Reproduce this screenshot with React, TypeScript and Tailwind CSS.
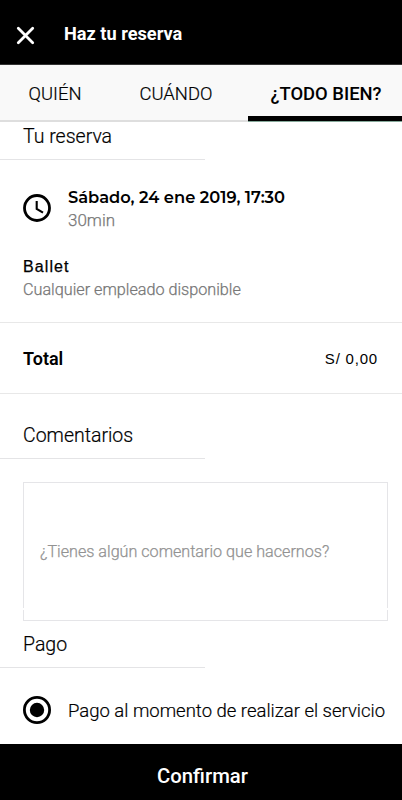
import React from "react";

function SectionTitle({ children }: { children: React.ReactNode }) {
  return (
    <h2 className="w-[205px] border-b border-[#e4e4e6] pl-[23px] pt-px text-[19.5px] font-light leading-6 text-black [-webkit-text-stroke:0.2px_currentColor]">
      {children}
    </h2>
  );
}

export default function App() {
  return (
    <div className="flex h-[800px] w-[402px] flex-col overflow-hidden bg-white font-['Roboto',sans-serif] text-black">
      <header className="flex h-16 shrink-0 items-start bg-black text-white">
        <svg className="ml-4 mt-[26px] h-[19px] w-[19px]" viewBox="0 0 19 19" fill="none" stroke="white" strokeWidth="2.8" strokeLinecap="round">
          <path d="M2.3 2.3 16.7 16.7M16.7 2.3 2.3 16.7" />
        </svg>
        <h1 className="ml-[29px] mt-[22px] text-[18.2px] font-bold leading-6">Haz tu reserva</h1>
      </header>

      <nav className="flex h-[58px] shrink-0 border-t border-[#333] bg-[#f9f9f9] text-[18.4px] leading-6">
        <div className="h-[57px] w-[110px] border-b-2 border-[#dedede] pl-[28.5px] pt-[17px] font-light [-webkit-text-stroke:0.2px_currentColor]">QUIÉN</div>
        <div className="h-[57px] w-[138px] border-b-2 border-[#dedede] pl-[29.5px] pt-[17px] font-light [-webkit-text-stroke:0.2px_currentColor]">CUÁNDO</div>
        <div className="flex h-[57px] flex-1 flex-col justify-between pt-[17px] font-medium">
          <span className="pl-[22.5px]">¿TODO BIEN?</span>
          <span className="h-[6px] border-b border-[#86a99a] bg-black" />
        </div>
      </nav>

      <main className="flex h-[622px] shrink-0 flex-col">
        <div className="h-[38px] pt-[2px] [&>h2]:h-9">
          <SectionTitle>Tu reserva</SectionTitle>
        </div>

        <section className="h-[163px] border-b border-[#e8e8e8] pl-[23px] pt-[26px]">
          <div className="flex h-[69px]">
            <svg className="mt-[8px] h-7 w-7 shrink-0" viewBox="0 0 28 28" fill="none" stroke="black" strokeWidth="2.8">
              <circle cx="14" cy="14" r="12.5" />
              <path d="M13.7 7v7.8l6.3 3.8" strokeWidth="2.1" />
            </svg>
            <div className="ml-[17px]">
              <p className="whitespace-nowrap font-['Montserrat','Inter',sans-serif] text-[16.3px] font-semibold leading-[22px]">Sábado, 24 ene 2019, 17:30</p>
              <p className="text-[17px] font-light leading-6 text-[#777] [-webkit-text-stroke:0.25px_currentColor]">30min</p>
            </div>
          </div>
          <p className="font-['Liberation_Sans',sans-serif] text-base leading-6 tracking-[1.1px] [-webkit-text-stroke:0.25px_black]">Ballet</p>
          <p className="text-[16.2px] font-light leading-[22px] text-[#777] [-webkit-text-stroke:0.25px_currentColor]">Cualquier empleado disponible</p>
        </section>

        <section className="flex h-[71px] items-center justify-between border-b border-[#e8e8e8] pl-[23px] pr-6 pt-px">
          <span className="text-lg font-semibold leading-6">Total</span>
          <span className="font-['Liberation_Sans',sans-serif] text-[15px] leading-6 tracking-[0.8px]">S/ 0,00</span>
        </section>

        <div className="pt-[29px] [&>h2]:h-9">
          <SectionTitle>Comentarios</SectionTitle>
        </div>
        <div className="ml-[23px] mt-[23px] flex h-[139px] w-[365px] shrink-0 flex-col justify-between">
          <div className="flex h-[126px] items-center border border-b-0 border-[#e5e5e8] pl-4 pt-[13px]">
            <span className="text-[16.15px] font-light leading-6 text-[#929292] [-webkit-text-stroke:0.25px_currentColor]">¿Tienes algún comentario que hacernos?</span>
          </div>
          <div className="h-[11px] border border-t-0 border-[#e5e5e8]" />
        </div>
        <div className="pt-[11px] [&>h2]:h-9">
          <SectionTitle>Pago</SectionTitle>
        </div>
        <label className="flex items-center pl-[23px] pt-[28px]">
          <svg className="h-7 w-7" viewBox="0 0 28 28">
            <circle cx="14" cy="14" r="12.6" fill="none" stroke="black" strokeWidth="2.8" />
            <circle cx="14" cy="14" r="7.2" />
          </svg>
          <span className="ml-[17px] whitespace-nowrap pt-px text-[18.5px] font-light leading-6 [-webkit-text-stroke:0.2px_currentColor]">Pago al momento de realizar el servicio</span>
        </label>
      </main>

      <button className="h-14 w-full shrink-0 bg-black pl-[3px] pt-2 text-[20.3px] font-medium leading-6 text-white">Confirmar</button>
    </div>
  );
}
